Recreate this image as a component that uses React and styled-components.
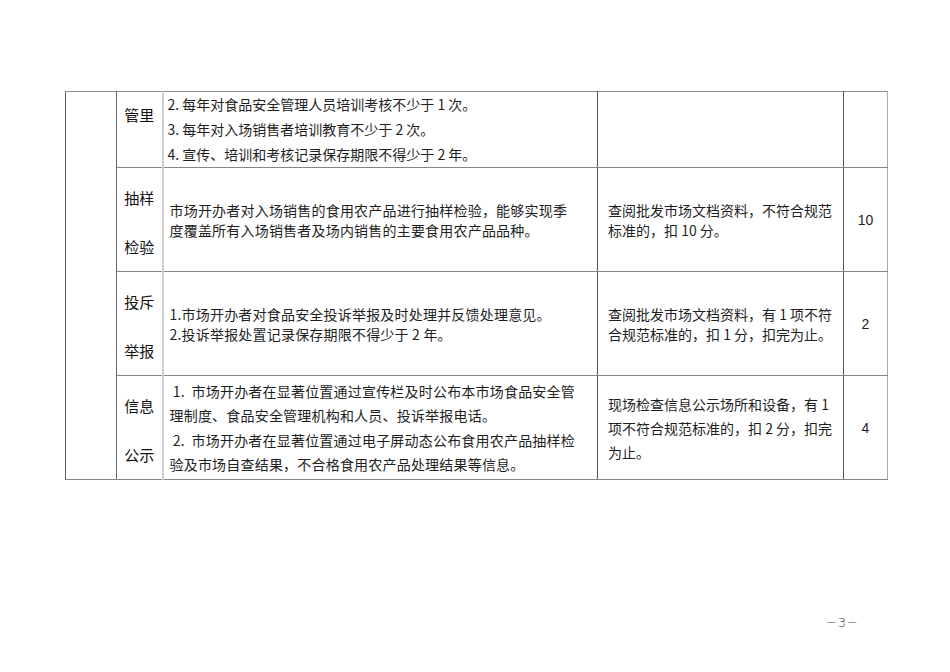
import React from "react";
import styled, { createGlobalStyle } from "styled-components";

const GlobalStyle = createGlobalStyle`
    html, body {
        margin: 0;
        padding: 0;
        background: #ffffff;
    }
    body {
        font-family: "Noto Sans CJK SC", "Noto Sans", sans-serif;
        color: #1e1e1e;
    }
`

const Page = styled.div`
    width: 950px;
    height: 672px;
    box-sizing: border-box;
    padding: 91px 0 0 65px;
    display: flex;
    flex-direction: column;
`

const Table = styled.table`
    border-collapse: collapse;
    table-layout: fixed;
    width: 822px;
    border-top: 1px solid #8c8c8c;
    border-left: 1px solid #5e5e5e;
    border-right: 1px solid #a8a8a8;
`

const Row = styled.tr`
    height: ${p => p.h}px;
    & > td {
        border-bottom: 1px solid #858585;
    }
`

const BlankCell = styled.td`
    border-right: 1px solid #6a6a6a;
    padding: 0;
`

const LabelCell = styled.td`
    vertical-align: top;
    text-align: center;
    padding: ${p => p.first ? "0" : "5px"} 0 0 0;
    font-size: 15px;
    line-height: ${p => p.first ? "46px" : "49px"};
    color: #111;
    border-right: 2px solid #cfcfcf;
`

const DescCell = styled.td`
    vertical-align: ${p => p.top ? "top" : "middle"};
    padding: 0 0 0 4px;
    font-size: 14px;
    line-height: ${p => p.lh}px;
    letter-spacing: ${p => p.serif ? "0.2px" : "0"};
    border-right: 1px solid #555;
`

const RuleCell = styled.td`
    vertical-align: middle;
    padding: 0 0 0 10px;
    font-size: 14px;
    line-height: ${p => p.lh}px;
    border-right: 1px solid #555;
`

const ScoreCell = styled.td`
    vertical-align: middle;
    text-align: center;
    font-size: 14px;
    font-family: "Liberation Sans", "Noto Sans CJK SC", sans-serif;
    padding: 0;
`

const Line = styled.div`
    white-space: pre;
    padding-left: ${p => p.indent || 0}px;
`

const Footer = styled.div`
    margin-top: auto;
    padding: 0 91px 42px 0;
    display: flex;
    justify-content: flex-end;
    font-family: "DejaVu Sans", "Liberation Serif", serif;
    font-weight: 300;
    font-size: 13px;
    letter-spacing: 1px;
    color: #444;
`

const rows = [
    {
        h: 76,
        label: ["管里"],
        first: true,
        top: true,
        lh: 25,
        desc: [
            "2. 每年对食品安全管理人员培训考核不少于 1 次。",
            "3. 每年对入场销售者培训教育不少于 2 次。",
            "4. 宣传、培训和考核记录保存期限不得少于 2 年。",
        ],
        rule: [],
        score: "",
    },
    {
        h: 102,
        label: ["抽样", "检验"],
        lh: 20,
        serif: true,
        desc: [
            "市场开办者对入场销售的食用农产品进行抽样检验，能够实现季",
            "度覆盖所有入场销售者及场内销售的主要食用农产品品种。",
        ],
        indent: 2,
        rule: ["查阅批发市场文档资料，不符合规范", "标准的，扣 10 分。"],
        score: "10",
    },
    {
        h: 103,
        label: ["投斥", "举报"],
        lh: 20,
        serif: true,
        desc: [
            "1.市场开办者对食品安全投诉举报及时处理并反馈处理意见。",
            "2.投诉举报处置记录保存期限不得少于 2 年。",
        ],
        indent: 2,
        rule: ["查阅批发市场文档资料，有 1 项不符", "合规范标准的，扣 1 分，扣完为止。"],
        score: "2",
    },
    {
        h: 101,
        label: ["信息", "公示"],
        lh: 24.5,
        serif: true,
        desc: [
            " 1.  市场开办者在显著位置通过宣传栏及时公布本市场食品安全管",
            "理制度、食品安全管理机构和人员、投诉举报电话。",
            " 2.  市场开办者在显著位置通过电子屏动态公布食用农产品抽样检",
            "验及市场自查结果，不合格食用农产品处理结果等信息。",
        ],
        indent: 2,
        rule: ["现场检查信息公示场所和设备，有 1", "项不符合规范标准的，扣 2 分，扣完", "为止。"],
        ruleLh: 24,
        score: "4",
    },
]

const App = () => {
    return (
        <>
            <GlobalStyle />
            <Page>
                <Table>
                    <colgroup>
                        <col style={{ width: 51 }} />
                        <col style={{ width: 46 }} />
                        <col style={{ width: 435 }} />
                        <col style={{ width: 246 }} />
                        <col style={{ width: 44 }} />
                    </colgroup>
                    <tbody>
                        {rows.map((r, i) => (
                            <Row key={i} h={r.h}>
                                {i === 0 && <BlankCell rowSpan={rows.length} />}
                                <LabelCell first={r.first}>
                                    {r.label.map(t => <div key={t}>{t}</div>)}
                                </LabelCell>
                                <DescCell top={r.top} lh={r.lh} serif={r.serif}>
                                    {r.desc.map(t => <Line key={t} indent={r.indent}>{t}</Line>)}
                                </DescCell>
                                <RuleCell lh={r.ruleLh || 20}>
                                    {r.rule.map(t => <Line key={t}>{t}</Line>)}
                                </RuleCell>
                                <ScoreCell>{r.score}</ScoreCell>
                            </Row>
                        ))}
                    </tbody>
                </Table>
                <Footer>−3−</Footer>
            </Page>
        </>
    );
};

export default App;
